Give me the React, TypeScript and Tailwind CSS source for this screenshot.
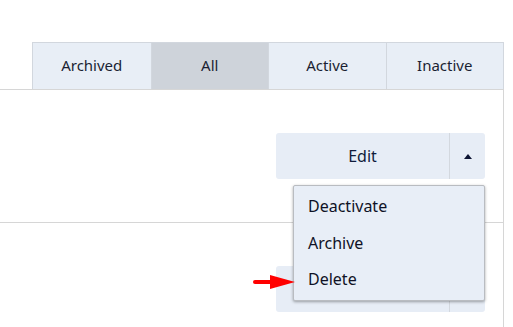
const TABS = [
  { label: 'Archived', active: false },
  { label: 'All', active: true },
  { label: 'Active', active: false },
  { label: 'Inactive', active: false },
]

const MENU = ['Deactivate', 'Archive', 'Delete']

function EditButton() {
  return (
    <div className="flex h-[46px] w-[209px] rounded-[3px] bg-[#e7edf6] text-[#101c3c]">
      <button className="flex-1 text-[16px]">Edit</button>
      <button className="flex w-[36px] items-center justify-center border-l border-[#d3d8df]">
        <span className="h-0 w-0 border-x-[4.5px] border-b-[5px] border-x-transparent border-b-[#0d1433]" />
      </button>
    </div>
  )
}

export default function App() {
  return (
    <div className="relative h-[327px] w-[513px] overflow-hidden bg-white font-['Noto_Sans',sans-serif]">
      {/* tab bar */}
      <div className="flex w-[504px] justify-end pt-[42px]">
        <div className="flex h-[47px] border-x border-t border-[#d2d7de]">
          {TABS.map((t, i) => (
            <div
              key={t.label}
              className={`flex w-[117.5px] items-center justify-center pb-[1px] text-[15px] text-[#1a1f33] ${
                i > 0 ? 'border-l border-[#d2d7de]' : ''
              } ${t.active ? 'bg-[#ced3da]' : 'bg-[#e8eef6]'}`}
            >
              {t.label}
            </div>
          ))}
        </div>
      </div>

      {/* list panel */}
      <div className="w-[504px] border-r border-t border-[#d6d6d6]">
        <div className="flex h-[133px] justify-end border-b border-[#d6d6d6] pr-[18px] pt-[43px]">
          <EditButton />
        </div>
        <div className="flex h-[110px] justify-end pr-[18px] pt-[43px]">
          <EditButton />
        </div>
      </div>

      {/* open dropdown */}
      <div className="absolute left-[293px] top-[185px] w-[192px] rounded-[2px] border border-[#b9bcc1] bg-[#e8eef7] py-[2px] shadow-[0_1px_3px_rgba(0,0,0,0.35)]">
        {MENU.map(m => (
          <div key={m} className="flex h-[36.5px] items-center pl-[14px] text-[16px] text-[#0f1226]">
            {m}
          </div>
        ))}
      </div>

      {/* pointer arrow */}
      <svg className="absolute left-[252px] top-[274px]" width="44" height="16" viewBox="0 0 44 16">
        <rect x="1" y="6" width="20" height="4" rx="2" fill="#f00" />
        <polygon points="18,1 43,8 18,15" fill="#f00" />
      </svg>
    </div>
  )
}
